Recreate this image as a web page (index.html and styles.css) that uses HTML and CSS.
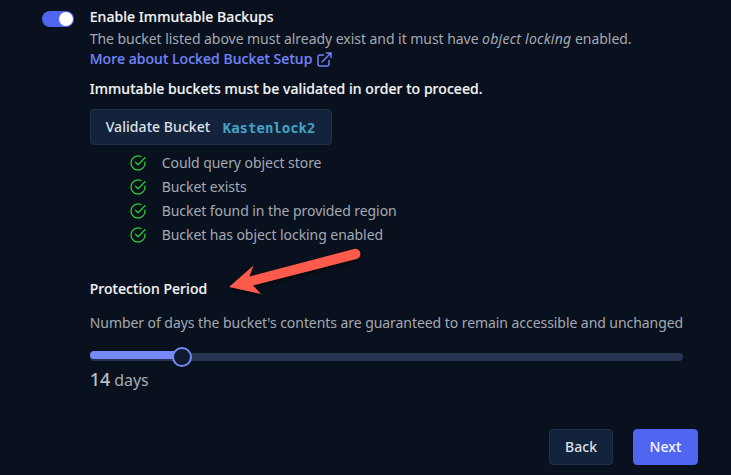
FILE: index.html
```html
<!DOCTYPE html>
<html lang="en">
<head>
<meta charset="utf-8">
<title>Immutable Backups</title>
<link rel="stylesheet" href="styles.css">
</head>
<body>
<svg class="defs" width="0" height="0" aria-hidden="true">
  <symbol id="check" viewBox="0 0 24 24"><path d="M22.5 10.8V12A10.5 10.5 0 1 1 16.3 2.4M22.5 4.2 12 14.7 8.3 11"/></symbol>
</svg>
<main class="form">
  <div class="toggle"><span class="knob"></span></div>
  <section class="content">
    <h2 class="title">Enable Immutable Backups</h2>
    <p class="text intro">The bucket listed above must already exist and it must have <em>object locking</em> enabled.</p>
    <a class="link"><span>More about Locked Bucket Setup</span>
      <svg class="external" viewBox="0 0 15 15"><path d="M6.5 3H3Q1 3 1 5V12Q1 14 3 14H10Q12 14 12 12V8.5M5.2 9.8 13.7 1.3M9.5 1H14V5.5"/></svg>
    </a>
    <p class="note">Immutable buckets must be validated in order to proceed.</p>
    <button class="btn validate"><span>Validate Bucket</span><code>Kastenlock2</code></button>
    <ul class="checks">
      <li><svg><use href="#check"/></svg><span>Could query object store</span></li>
      <li><svg><use href="#check"/></svg><span>Bucket exists</span></li>
      <li><svg><use href="#check"/></svg><span>Bucket found in the provided region</span></li>
      <li><svg><use href="#check"/></svg><span>Bucket has object locking enabled</span></li>
    </ul>
    <h3 class="period">Protection Period</h3>
    <p class="text period-text">Number of days the bucket's contents are guaranteed to remain accessible and unchanged</p>
    <div class="slider"><div class="fill"></div><div class="thumb"></div></div>
    <p class="days"><b>14</b> <span>days</span></p>
  </section>
</main>
<footer class="actions">
  <button class="btn">Back</button>
  <button class="btn primary">Next</button>
</footer>
<svg class="arrow" viewBox="0 0 150 65"><path d="M9 52 33.5 30.5 29.5 41.5 134 14A4.8 4.8 0 0 1 136.500 24L33 50.500 41 59Z"/></svg>
</body>
</html>
```

FILE: styles.css
```css
* { box-sizing: border-box; }
body {
  margin: 0;
  height: 475px;
  overflow: hidden;
  position: relative;
  background: #0a111e;
  color: #a3a9b3;
  font: 14px/20px "Noto Sans", sans-serif;
  letter-spacing: -0.06px;
}
h2, h3, p, ul { margin: 0; padding: 0; }
.defs { position: absolute; }
.form { display: flex; gap: 16px; padding: 7px 48px 0 42px; }
.toggle {
  width: 32px;
  height: 16px;
  margin-top: 4px;
  padding: 1px;
  border-radius: 8px;
  background: #5066f1;
  display: flex;
  justify-content: flex-end;
  flex: none;
}
.knob { width: 14px; height: 14px; border-radius: 50%; background: #fff; }
.content { flex: 1; white-space: nowrap; margin-left: -0.3px; }
.title, .note, .period { font-size: 14px; font-weight: 500; line-height: 20px; letter-spacing: 0.055px; color: #f2f3f5; -webkit-text-stroke: 0.15px currentColor; }
.text { margin-top: 2px; }
.intro { letter-spacing: -0.045px; }
.text em { letter-spacing: 0.25px; }
.link { display: flex; align-items: center; gap: 5px; color: #7084f5; font-weight: 500; letter-spacing: 0.055px; -webkit-text-stroke: 0.15px currentColor; }
.external { width: 15px; height: 15px; fill: none; stroke: currentColor; stroke-width: 1.5; stroke-linecap: round; stroke-linejoin: round; }
.note { margin-top: 10px; }
.btn {
  height: 36px;
  padding: 0 15px;
  border: 1px solid #203048;
  border-radius: 4px;
  background: #13233b;
  color: #dfe2e7;
  font: 500 14px/20px "Noto Sans", sans-serif;
  letter-spacing: 0.06px;
}
.validate { display: flex; align-items: center; gap: 12px; width: 242px; margin-top: 10px; }
.validate code { padding: 2px 0 0 0.5px; color: #45a3c4; font: bold 14px/20px "DejaVu Sans Mono", monospace; letter-spacing: 0; }
.checks { list-style: none; margin-top: 6px; padding-left: 40px; }
.checks li { display: flex; align-items: center; gap: 16px; height: 24px; }
.checks svg { width: 16px; height: 16px; fill: none; stroke: #2fc534; stroke-width: 2; stroke-linecap: round; stroke-linejoin: round; }
.period { margin-top: 32px; }
.period-text { margin-top: 14px; }
.slider { position: relative; width: 593px; height: 8px; margin-top: 20px; border-radius: 4px; background: #26344f; }
.fill { position: absolute; top: -2px; left: 0; width: 92px; height: 8px; border-radius: 4px; background: #7589fa; }
.thumb { position: absolute; left: 82px; top: -6px; width: 20px; height: 20px; border: 2px solid #7589fa; border-radius: 50%; background: #0f1a2d; }
.days { margin-top: 8px; font-size: 16px; line-height: 20px; letter-spacing: -0.06px; }
.days b { font-size: 18px; font-weight: 500; color: #b8bdc6; }
.actions { display: flex; justify-content: flex-end; gap: 20px; padding: 39px 33px 0 0; }
.actions .btn { width: 64px; }
.actions .primary { width: 65px; border-color: #5066f1; background: #5066f1; color: #f5f6ff; }
.arrow { position: absolute; left: 220px; top: 235px; width: 150px; height: 65px; fill: #ff5a4c; filter: drop-shadow(0 2px 2px rgba(0, 0, 0, 0.6)); }
```
